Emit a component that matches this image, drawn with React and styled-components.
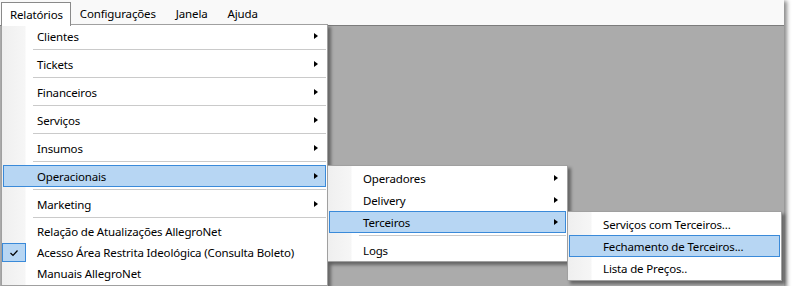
import React from 'react'
import styled, { createGlobalStyle } from 'styled-components'

const GlobalStyle = createGlobalStyle`
  body {
    margin: 0;
    background: #ffffff;
    font-family: "Noto Sans", "Open Sans", sans-serif;
  }
`

const Window = styled.div`
  position: relative;
  display: flex;
  flex-direction: column;
  width: 784px;
  height: 286px;
  box-shadow: 2px 2px 4px 1px rgba(0, 0, 0, 0.45);
`

const MenuBar = styled.div`
  display: flex;
  align-items: flex-end;
  height: 26px;
  box-sizing: border-box;
  padding-left: 1px;
  background: #f9f9f9;
  border-bottom: 1px solid #7c7c7c;
  font-size: 11.5px;
  letter-spacing: -0.15px;
  color: #000;
`

const BarItem = styled.div`
  position: relative;
  z-index: 2;
  display: flex;
  align-items: center;
  height: ${p => (p.$open ? 24 : 22)}px;
  box-sizing: border-box;
  margin-bottom: ${p => (p.$open ? -1 : 1)}px;
  padding: 0 ${p => (p.$open ? 7 : 10)}px 0 ${p => (p.$open ? 8 : 8)}px;
  background: ${p => (p.$open ? '#ffffff' : 'transparent')};
  border: 1px solid ${p => (p.$open ? '#8a8a8a' : 'transparent')};
  border-bottom: none;
`

const Workspace = styled.div`
  flex: 1;
  background: #ababab;
`

const Menu = styled.div`
  position: absolute;
  z-index: 1;
  left: ${p => p.$left}px;
  top: ${p => p.$top}px;
  width: ${p => p.$width}px;
  box-sizing: border-box;
  padding: ${p => p.$padTop ?? 1}px 0 ${p => p.$padBottom || 0}px;
  background: linear-gradient(to right, #efefef 0, #f6f6f6 23px, #ffffff 24px);
  border: 1px solid #a0a0a0;
  box-shadow: 3px 3px 3px rgba(0, 0, 0, 0.4);
  font-size: 11.5px;
  letter-spacing: -0.15px;
  color: #000;
`

const Item = styled.div`
  display: flex;
  align-items: center;
  height: ${p => p.$h || 22}px;
  box-sizing: border-box;
  margin: 0 1px;
  border: 1px solid ${p => (p.$active ? '#3a8ad9' : 'transparent')};
  background: ${p => (p.$active ? '#b7d6f3' : 'transparent')};
  white-space: nowrap;
`

const Gutter = styled.div`
  display: flex;
  align-items: center;
  flex: none;
  width: 33px;
  height: 100%;
`

const Check = styled.div`
  display: flex;
  align-items: center;
  justify-content: center;
  width: 24px;
  height: 19px;
  box-sizing: border-box;
  margin-left: -2px;
  background: #b7d6f3;
  border: 1px solid #3a8ad9;
`

const Arrow = styled.span`
  margin-left: auto;
  margin-right: 7px;
  width: 0;
  height: 0;
  border-left: 4px solid #000;
  border-top: 3.5px solid transparent;
  border-bottom: 3.5px solid transparent;
`

const Separator = styled.div`
  position: relative;
  height: 6px;
  margin: 0 1px 0 31px;

  &::after {
    content: '';
    position: absolute;
    left: 0;
    right: 0;
    top: 2px;
    height: 1px;
    background: #cacaca;
  }
`

const MenuEntry = ({ label, sub, active, checked, h }) => (
  <Item $active={active} $h={h}>
    <Gutter>
      {checked && (
        <Check>
          <svg width="10" height="8" viewBox="0 0 10 8">
            <polyline points="1.5,4 4,6.5 8.5,1.5" fill="none" stroke="#000" strokeWidth="1.2" />
          </svg>
        </Check>
      )}
    </Gutter>
    {label}
    {sub && <Arrow />}
  </Item>
)

const mainGroups = ['Clientes', 'Tickets', 'Financeiros', 'Serviços', 'Insumos', 'Operacionais', 'Marketing']

const App = () => (
  <>
    <GlobalStyle />
    <Window>
      <MenuBar>
        <BarItem $open>Relatórios</BarItem>
        <BarItem>Configurações</BarItem>
        <BarItem>Janela</BarItem>
        <BarItem>Ajuda</BarItem>
      </MenuBar>
      <Workspace />

      <Menu $left={1} $top={24} $width={327} $padTop={0} $padBottom={1}>
        {mainGroups.map(label => (
          <React.Fragment key={label}>
            <MenuEntry label={label} sub active={label === 'Operacionais'} />
            <Separator />
          </React.Fragment>
        ))}
        <MenuEntry label="Relação de Atualizações AllegroNet" h={21} />
        <MenuEntry label="Acesso Área Restrita Ideológica (Consulta Boleto)" checked h={21} />
        <MenuEntry label="Manuais AllegroNet" h={21} />
      </Menu>

      <Menu $left={327} $top={165} $width={241}>
        <MenuEntry label="Operadores" sub />
        <MenuEntry label="Delivery" sub />
        <MenuEntry label="Terceiros" sub active />
        <Separator />
        <MenuEntry label="Logs" />
      </Menu>

      <Menu $left={567} $top={211} $width={215} $padBottom={1}>
        <MenuEntry label="Serviços com Terceiros..." />
        <MenuEntry label="Fechamento de Terceiros..." active />
        <MenuEntry label="Lista de Preços.." />
      </Menu>
    </Window>
  </>
)

export default App
